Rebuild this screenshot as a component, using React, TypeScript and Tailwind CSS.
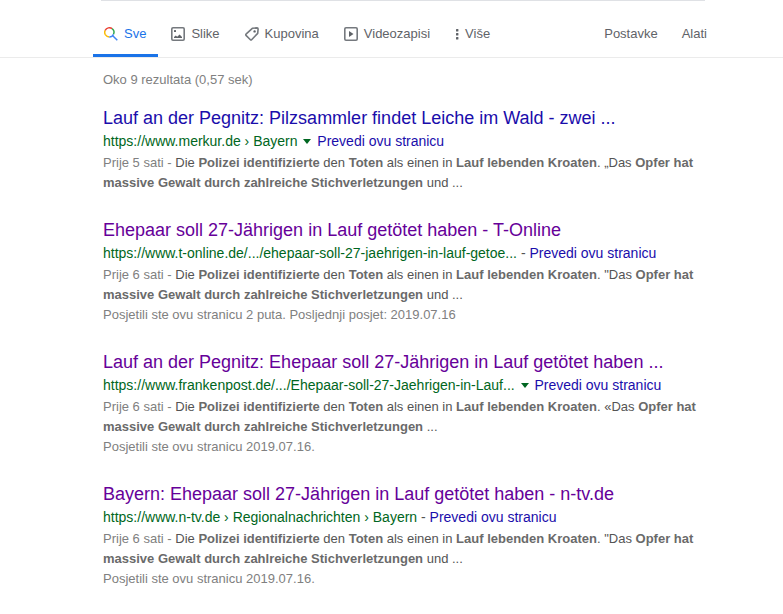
import React, { Fragment } from 'react';
import { clsx } from 'clsx';

type Piece = { text: string; bold?: boolean };

interface Result {
    title: string;
    url: string;
    visited: boolean;
    menu: boolean;
    age: string;
    opening: string;
    ending: string;
    note?: string;
}

const results: Result[] = [
    {
        title: 'Lauf an der Pegnitz: Pilzsammler findet Leiche im Wald - zwei ...',
        url: 'https://www.merkur.de › Bayern',
        visited: false,
        menu: true,
        age: 'Prije 5 sati',
        opening: '„',
        ending: ' und ...',
    },
    {
        title: 'Ehepaar soll 27-Jährigen in Lauf getötet haben - T-Online',
        url: 'https://www.t-online.de/.../ehepaar-soll-27-jaehrigen-in-lauf-getoe...',
        visited: true,
        menu: false,
        age: 'Prije 6 sati',
        opening: '"',
        ending: ' und ...',
        note: 'Posjetili ste ovu stranicu 2 puta. Posljednji posjet: 2019.07.16',
    },
    {
        title: 'Lauf an der Pegnitz: Ehepaar soll 27-Jährigen in Lauf getötet haben ...',
        url: 'https://www.frankenpost.de/.../Ehepaar-soll-27-Jaehrigen-in-Lauf...',
        visited: true,
        menu: true,
        age: 'Prije 6 sati',
        opening: '«',
        ending: ' ...',
        note: 'Posjetili ste ovu stranicu 2019.07.16.',
    },
    {
        title: 'Bayern: Ehepaar soll 27-Jährigen in Lauf getötet haben - n-tv.de',
        url: 'https://www.n-tv.de › Regionalnachrichten › Bayern',
        visited: true,
        menu: false,
        age: 'Prije 6 sati',
        opening: '"',
        ending: ' und ...',
        note: 'Posjetili ste ovu stranicu 2019.07.16.',
    },
];

const snippet = (result: Result): Piece[] => [
    { text: 'Die ' },
    { text: 'Polizei identifizierte', bold: true },
    { text: ' den ' },
    { text: 'Toten', bold: true },
    { text: ' als einen in ' },
    { text: 'Lauf lebenden Kroaten', bold: true },
    { text: `. ${result.opening}Das ` },
    { text: 'Opfer hat massive Gewalt durch zahlreiche Stichverletzungen', bold: true },
    { text: result.ending },
];

const SearchIcon = () => (
    <svg className="size-3.5 shrink-0" viewBox="0 0 14 14" fill="none" strokeWidth="1.5">
        <path d="M1.5 7.9A4.6 4.6 0 0 1 1.2 3.3" stroke="#fbbc05" />
        <path d="M1.2 3.3A4.6 4.6 0 0 1 8.1 1.7" stroke="#ea4335" />
        <path d="M8.1 1.7A4.6 4.6 0 0 1 9.5 7.3" stroke="#34a853" />
        <path d="M1.5 7.9A4.6 4.6 0 0 0 5.3 9.9" stroke="#fbbc05" />
        <path d="M5.3 9.9A4.6 4.6 0 0 0 9.5 7.3M8.5 8.5L13.3 13.3" stroke="#4285f4" />
    </svg>
);

const ImageIcon = () => (
    <svg className="size-3.5 shrink-0" viewBox="0 0 14 14" fill="none">
        <rect x="0.8" y="0.8" width="12.4" height="12.4" rx="1.2" stroke="#75797e" strokeWidth="1.6" />
        <rect x="3" y="3" width="2" height="2" rx="0.5" fill="#5f6368" />
        <path d="M3 11v-1l1.8-1.6L6.2 9.7 8.6 7.6 11 10v1z" fill="#5f6368" />
    </svg>
);

const TagIcon = () => (
    <svg className="size-3.5 shrink-0" viewBox="0 0 14 14" fill="none">
        <path
            d="M7.6 1.2 12 .9q1.1 0 1.1 1.1L12.7 6.4 6.6 12.7q-.6.6-1.2 0L1 8.4q-.6-.6 0-1.2z"
            stroke="#75797e"
            strokeWidth="1.6"
            strokeLinejoin="round"
        />
        <circle cx="9.6" cy="4.4" r="1.2" fill="#5f6368" />
    </svg>
);

const VideoIcon = () => (
    <svg className="size-3.5 shrink-0" viewBox="0 0 14 14" fill="none">
        <rect x="0.8" y="0.8" width="12.4" height="12.4" rx="1.2" stroke="#75797e" strokeWidth="1.6" />
        <path d="M5 4v6l4.5-3z" fill="#5f6368" />
    </svg>
);

const MoreIcon = () => (
    <svg className="h-3.5 w-1 shrink-0" viewBox="0 0 4 14" fill="#5f6368">
        <rect x="1" y="2" width="2.4" height="2.4" rx="0.5" />
        <rect x="1" y="6" width="2.4" height="2.4" rx="0.5" />
        <rect x="1" y="10" width="2.4" height="2.4" rx="0.5" />
    </svg>
);

const tabs = [
    { label: 'Sve', icon: <SearchIcon />, active: true },
    { label: 'Slike', icon: <ImageIcon /> },
    { label: 'Kupovina', icon: <TagIcon /> },
    { label: 'Videozapisi', icon: <VideoIcon /> },
];

const tabClass = 'flex h-full items-center gap-1.5 border-b-3 pl-[11px] pr-3';

function Navigation() {
    return (
        <header className="border-b border-[#ebebeb] pl-[93px] text-[13px] leading-5 text-[#5f6368]">
            <div className="ml-2 h-px max-w-[604px] bg-[#dfe1e5]" />
            <nav className="flex h-14 max-w-[614px] items-stretch justify-between pt-[13px]">
                <div className="flex gap-0.5">
                    {tabs.map((tab) => (
                        <a
                            key={tab.label}
                            href="#"
                            className={clsx(tabClass, tab.active ? 'border-[#1a73e8] text-[#1a73e8]' : 'border-transparent')}
                        >
                            {tab.icon}
                            {tab.label}
                        </a>
                    ))}
                    <button type="button" className={clsx(tabClass, 'border-transparent')}>
                        <MoreIcon />
                        Više
                    </button>
                </div>
                <div className="flex items-center gap-6 pb-[3px]">
                    <button type="button">Postavke</button>
                    <button type="button">Alati</button>
                </div>
            </nav>
        </header>
    );
}

function ResultItem({ result }: { result: Result }) {
    return (
        <article className="text-[13px] leading-5 text-[#545454]">
            <h3 className="text-lg leading-[26px]">
                <a href="#" className={result.visited ? 'text-[#609]' : 'text-[#1a0dab]'}>
                    {result.title}
                </a>
            </h3>
            <div className="text-sm leading-[21px]">
                <cite className="not-italic text-[#006621]">{result.url}</cite>{' '}
                {result.menu ? (
                    <button type="button" aria-label="Opcije" className="px-0.5 align-middle">
                        <svg className="h-1.5 w-2" viewBox="0 0 8 6" fill="#006621">
                            <path d="M0 0h8L4 5z" />
                        </svg>
                    </button>
                ) : (
                    '-'
                )}{' '}
                <a href="#" className="text-[#1a0dab]">Prevedi ovu stranicu</a>
            </div>
            <p className="mt-px">
                <span className="text-[#808080]">{result.age} - </span>
                {snippet(result).map((piece, index) =>
                    piece.bold ? (
                        <b key={index} className="font-bold text-[#6a6a6a]">{piece.text}</b>
                    ) : (
                        <Fragment key={index}>{piece.text}</Fragment>
                    ),
                )}
            </p>
            {result.note && <p className="text-[#808080]">{result.note}</p>}
        </article>
    );
}

export default function App() {
    return (
        <div className="min-h-screen bg-white font-['Liberation_Sans',Arial,sans-serif]">
            <Navigation />
            <main className="max-w-[703px] pb-6 pl-[103px]">
                <p className="pt-3 text-[13px] leading-5 text-[#808080]">Oko 9 rezultata (0,57 sek)</p>
                <div className="mt-[15px] flex flex-col gap-6">
                    {results.map((result) => (
                        <ResultItem key={result.title} result={result} />
                    ))}
                </div>
            </main>
        </div>
    );
}
